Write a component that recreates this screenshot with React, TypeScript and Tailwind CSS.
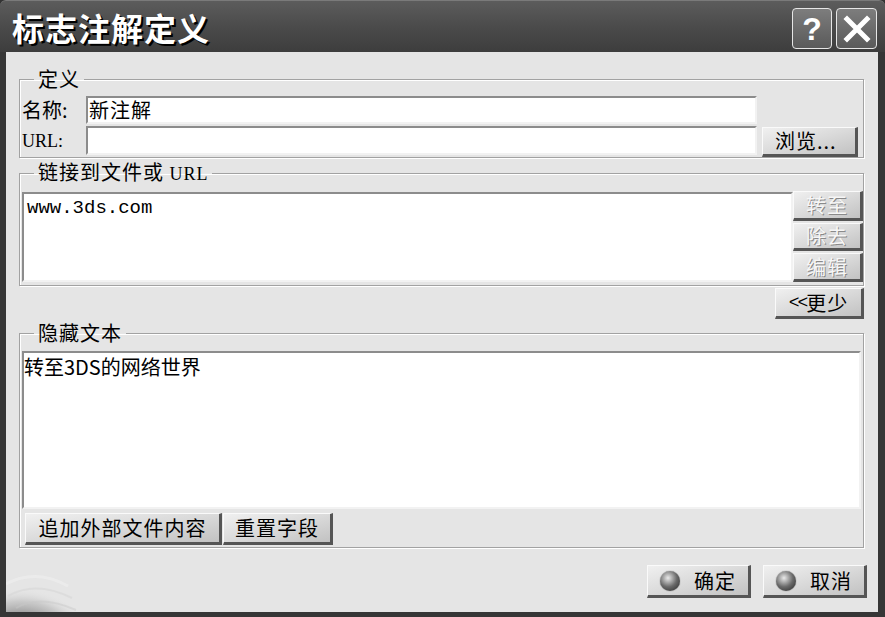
import type { ReactNode } from "react";

const cjk = "font-['Noto_Sans_CJK_SC','Liberation_Sans',sans-serif]";

function RaisedButton({
  children,
  className = "",
  disabled = false,
}: {
  children: ReactNode;
  className?: string;
  disabled?: boolean;
}) {
  return (
    <button
      className={`flex items-center justify-center border-t border-l border-t-[#fafafa] border-l-[#fafafa] border-r-[3px] border-b-[3px] border-r-[#555] border-b-[#555] bg-linear-to-br from-[#f0f0f0] via-[#dadada] to-[#c2c2c2] text-[20px] leading-none tracking-[1px] ${cjk} ${
        disabled
          ? "text-[#f6f6f6] [text-shadow:1px_1px_0_#8a8a8a]"
          : "text-black"
      } ${className}`}
    >
      {children}
    </button>
  );
}

function Sphere() {
  return (
    <span className="inline-block w-[20px] h-[20px] rounded-full bg-[radial-gradient(circle_at_40%_35%,#eaeaea,#6a6a6a_50%,#222)] shadow-[0_0_1px_#333]" />
  );
}

function Group({
  label,
  className = "",
  children,
}: {
  label: ReactNode;
  className?: string;
  children: ReactNode;
}) {
  return (
    <fieldset
      className={`w-[845px] border border-[#a2a2a2] shadow-[inset_1px_1px_0_#fff,1px_1px_0_#fff] pl-[2px] ${className}`}
    >
      <legend
        className={`ml-[12px] px-[4px] text-[20px] leading-[26px] tracking-[1px] text-black ${cjk}`}
      >
        {label}
      </legend>
      {children}
    </fieldset>
  );
}

const sunken =
  "bg-white border-2 border-t-[#8c8c8c] border-l-[#8c8c8c] border-b-[#f2f2f2] border-r-[#f2f2f2]";

export default function App() {
  return (
    <div className="w-[885px] h-[617px] flex flex-col bg-[#333] select-none">
      {/* title bar */}
      <div className="h-[52px] flex items-center rounded-t-[6px] border-t border-[#7a7a7a] bg-linear-to-b from-[#5c5c5c] via-[#4b4b4b] to-[#3d3d3d] pl-[12px] pr-[8px]">
        <div
          className={`flex-1 text-white text-[32px] font-bold leading-none tracking-[1px] [text-shadow:2px_2px_0_#000] ${cjk}`}
        >
          标志注解定义
        </div>
        <div className="flex gap-[4px] mt-[4px]">
          <div className="w-[40px] h-[41px] rounded-[4px] border border-[#e6e6e6] bg-linear-to-b from-[#7d7d7d] to-[#5a5a5a] flex items-center justify-center text-white text-[32px] font-bold leading-none font-['Liberation_Sans',sans-serif]">
            ?
          </div>
          <div className="w-[41px] h-[41px] rounded-[4px] border border-[#e6e6e6] bg-linear-to-b from-[#7d7d7d] to-[#5a5a5a] flex items-center justify-center">
            <svg width="28" height="28" viewBox="0 0 28 28">
              <path
                d="M4 4 L24 24 M24 4 L4 24"
                stroke="#fff"
                strokeWidth="5"
                strokeLinecap="square"
              />
            </svg>
          </div>
        </div>
      </div>

      {/* body */}
      <div className="relative flex-1 flex flex-col bg-[#e5e5e5] border-l-[6px] border-r-[7px] border-b-[5px] border-[#363636] pl-[13px] pr-[14px]">
        <Group label="定义" className="mt-[14px] pt-[4px]">
          <div className="flex items-center h-[28px]">
            <span className={`w-[64px] text-[20px] leading-none ${cjk}`}>
              名称:
            </span>
            <div
              className={`w-[671px] h-[28px] ${sunken} flex items-center pl-[1px] text-[20px] tracking-[1px] ${cjk}`}
            >
              新注解
            </div>
          </div>
          <div className="flex items-start mt-[2px] h-[31px]">
            <span className="w-[64px] h-[29px] flex items-center text-[18px] leading-none font-['Liberation_Serif',serif]">
              URL:
            </span>
            <div className={`w-[671px] h-[29px] ${sunken}`} />
            <RaisedButton className="ml-[5px] mt-[1px] w-[96px] h-[30px] justify-start pl-[12px]">
              浏览...
            </RaisedButton>
          </div>
        </Group>

        <Group
          label={
            <>
              链接到文件或{" "}
              <span className="font-['Liberation_Serif',serif] text-[18px]">
                URL
              </span>
            </>
          }
          className="mt-[1px] pt-[4px] pb-[3px]"
        >
          <div className="flex">
            <div
              className={`mt-[1px] w-[771px] h-[90px] ${sunken} px-[3px] pt-[3px] text-[19px] leading-[22px] font-['Liberation_Mono',monospace]`}
            >
              www.3ds.com
            </div>
            <div className="w-[70px] flex flex-col gap-[2px]">
              <RaisedButton disabled className="w-[70px] h-[30px]">
                转至
              </RaisedButton>
              <RaisedButton disabled className="w-[70px] h-[28px]">
                除去
              </RaisedButton>
              <RaisedButton disabled className="w-[70px] h-[29px]">
                编辑
              </RaisedButton>
            </div>
          </div>
        </Group>

        <div className="flex justify-end mt-[2px]">
          <RaisedButton className="w-[89px] h-[31px]">
            <span className="font-['Liberation_Mono',monospace] text-[18px] tracking-[-2px]">
              &lt;&lt;
            </span>
            更少
          </RaisedButton>
        </div>

        <Group label="隐藏文本" className="mt-[1px] pt-[5px] pb-[2px]">
          <div
            className={`w-[839px] h-[158px] ${sunken} pt-[2px] text-[20px] leading-[24px] ${cjk}`}
          >
            转至3DS的网络世界
          </div>
          <div className="flex mt-[4px] ml-[3px]">
            <RaisedButton className="w-[197px] h-[32px]">
              追加外部文件内容
            </RaisedButton>
            <RaisedButton className="ml-[1px] w-[110px] h-[32px]">
              重置字段
            </RaisedButton>
          </div>
        </Group>

        <div className="flex justify-end gap-[12px] mt-[17px] -mr-[3px]">
          <RaisedButton className="w-[104px] h-[33px] justify-start pl-[12px] gap-[14px]">
            <Sphere />
            确定
          </RaisedButton>
          <RaisedButton className="w-[104px] h-[33px] justify-start pl-[12px] gap-[14px]">
            <Sphere />
            取消
          </RaisedButton>
        </div>

        {/* corner decoration: dark swirl globe */}
        <svg
          className="absolute left-0 bottom-0"
          width="90"
          height="50"
          viewBox="0 0 90 50"
        >
          <defs>
            <radialGradient id="glb" cx="35%" cy="95%" r="75%">
              <stop offset="0" stopColor="#3c3c3c" />
              <stop offset="0.45" stopColor="#6a6a6a" />
              <stop offset="0.8" stopColor="#b8b8b8" stopOpacity="0.6" />
              <stop offset="1" stopColor="#e5e5e5" stopOpacity="0" />
            </radialGradient>
          </defs>
          <ellipse cx="30" cy="52" rx="50" ry="42" fill="url(#glb)" />
          <path
            d="M0 22 Q30 6 62 24"
            stroke="#f0f0f0"
            strokeWidth="3"
            fill="none"
            opacity="0.55"
          />
          <path
            d="M2 34 Q30 18 66 36"
            stroke="#d6d6d6"
            strokeWidth="2"
            fill="none"
            opacity="0.55"
          />
          <path
            d="M10 46 Q34 32 70 48"
            stroke="#c8c8c8"
            strokeWidth="2"
            fill="none"
            opacity="0.45"
          />
        </svg>
      </div>
    </div>
  );
}
